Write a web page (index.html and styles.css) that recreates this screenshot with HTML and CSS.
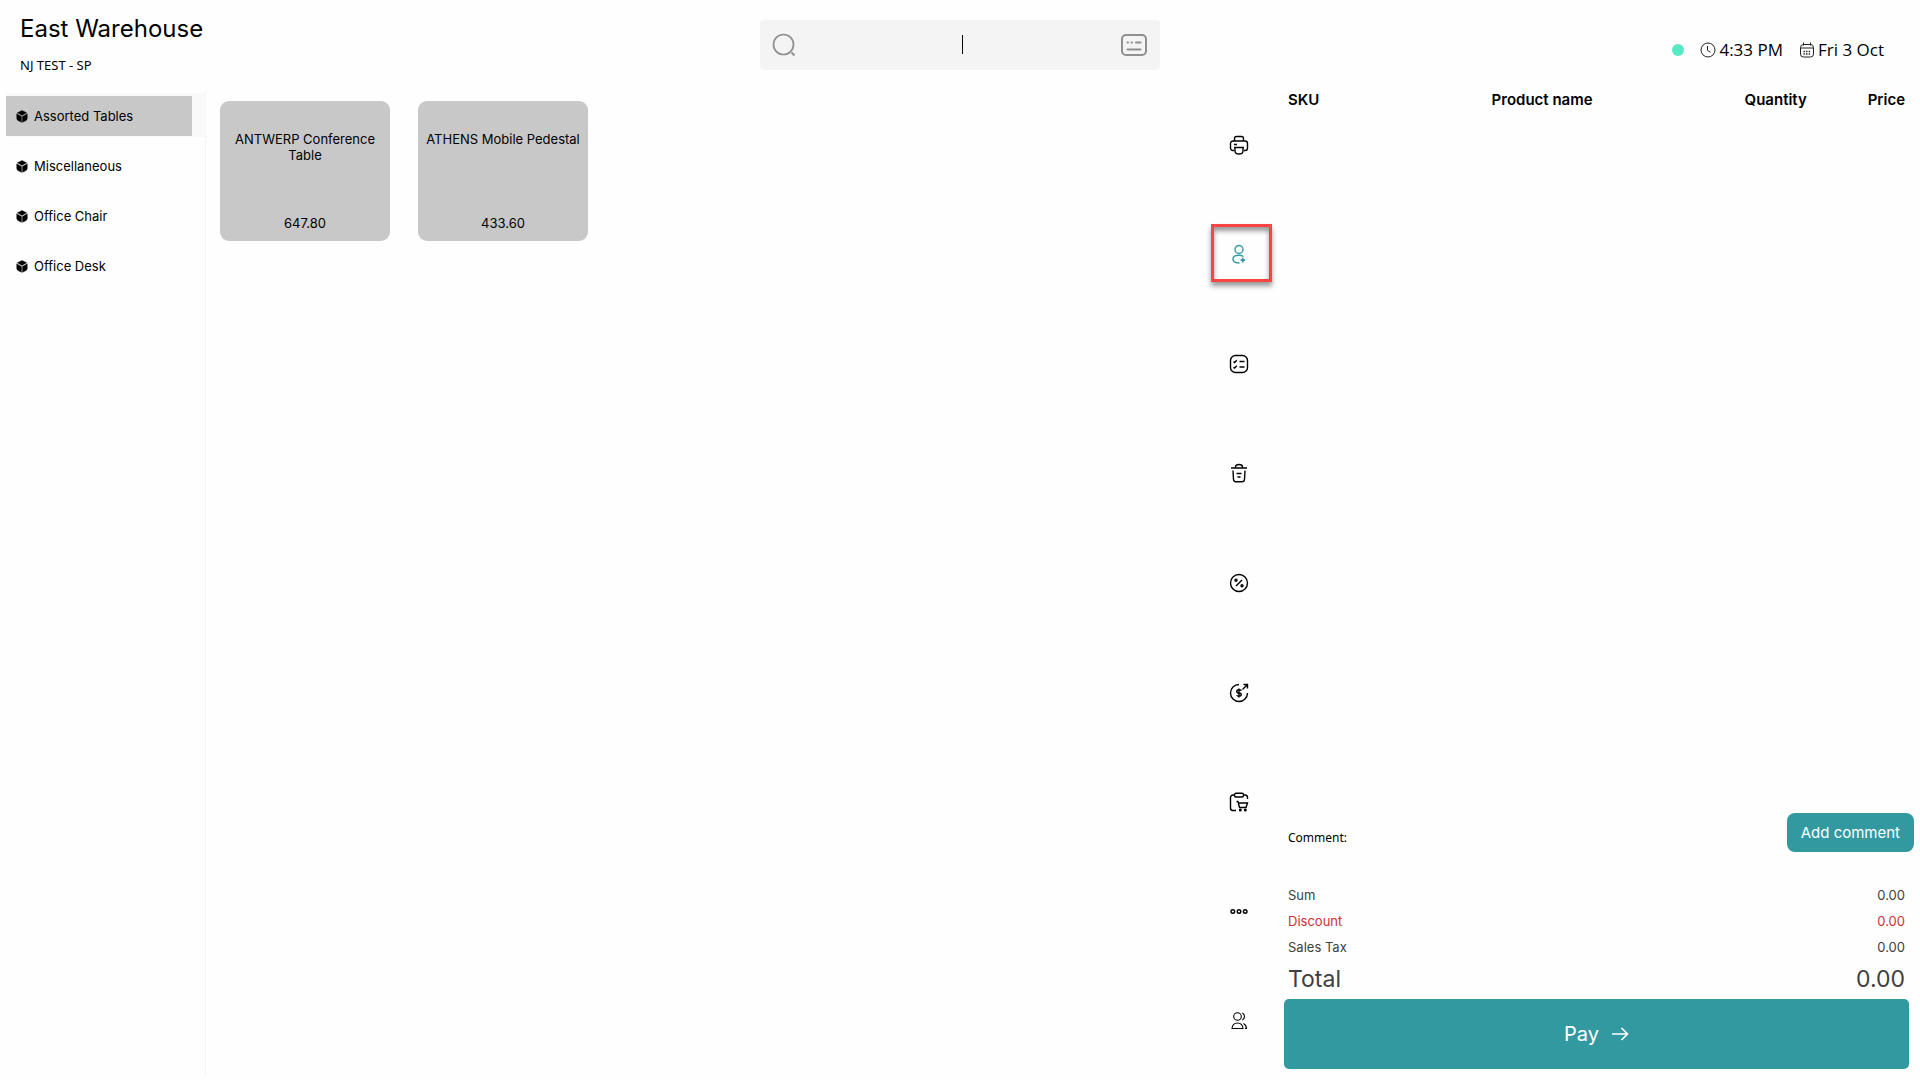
FILE: index.html
```
<!DOCTYPE html>
<html lang="en">
<head>
  <meta charset="UTF-8">
  <meta name="viewport" content="width=device-width, initial-scale=1.0">
  <title>East Warehouse</title>
  <link rel="stylesheet" href="styles.css">
</head>
<body>
  <!-- shared category icon -->
  <svg class="hidden">
    <symbol id="cube" viewBox="0 0 12 14">
      <path d="M6 .5 L11 3 L6 5.800 L1 3 Z M.3 4 L5.500 7 V13.300 L2 11.600 Q.3 10.700 .3 9 Z M11.700 4 L6.500 7 V13.300 L10 11.600 Q11.700 10.700 11.700 9 Z" fill="#000" stroke="#000" stroke-width=".4" stroke-linejoin="round"/>
    </symbol>
  </svg>

  <header class="header">
    <div class="store">
      <h1 class="store-name">East Warehouse</h1>
      <p class="store-user">NJ TEST - SP</p>
    </div>
    <div class="search">
      <svg class="search-icon" width="24" height="24" viewBox="0 0 24 24" fill="none" stroke="#8f8f8f" stroke-width="1.700">
        <circle cx="11.500" cy="11.500" r="10"/>
        <path d="M19.500 19.500l3 3" stroke-width="2"/>
      </svg>
      <input class="search-field" type="text" name="search" aria-label="Search" />
      <span class="caret"></span>
      <button class="keyboard-btn" aria-label="Keyboard">
        <svg width="26" height="22" viewBox="0 0 26 22" fill="none" stroke="#8f8f8f" stroke-width="2" stroke-linecap="round">
          <rect x="1" y="1" width="24" height="20" rx="4"/>
          <path d="M6.500 8.500h.5M10.500 8.500h.5M15 8.500h4.500M6.500 15.500h13"/>
        </svg>
      </button>
    </div>
    <div class="status">
      <span class="online"></span>
      <span class="status-item">
        <svg width="16" height="16" viewBox="0 0 16 16" fill="none" stroke="#222">
          <circle cx="8" cy="8" r="7"/>
          <path d="M7.500 4v4.300l3 2"/>
        </svg>
        4:33 PM
      </span>
      <span class="status-item">
        <svg width="16" height="16" viewBox="0 0 16 16" fill="none" stroke="#222">
          <rect x="1.500" y="2.500" width="13" height="12.500" rx="3"/>
          <path d="M1.500 6h13M4.500 .5v3M11.500 .5v3"/>
          <path d="M4.500 9.500h7M4.500 12h7" stroke-width="1.400" stroke-dasharray="1.400 1.200"/>
        </svg>
        Fri 3 Oct
      </span>
    </div>
  </header>

  <main class="main">
    <nav class="sidebar">
      <div class="category active"><button class="category-btn"><svg width="12" height="13"><use href="#cube"/></svg>Assorted Tables</button></div>
      <div class="category"><button class="category-btn"><svg width="12" height="13"><use href="#cube"/></svg>Miscellaneous</button></div>
      <div class="category"><button class="category-btn"><svg width="12" height="13"><use href="#cube"/></svg>Office Chair</button></div>
      <div class="category"><button class="category-btn"><svg width="12" height="13"><use href="#cube"/></svg>Office Desk</button></div>
    </nav>

    <section class="products">
      <button class="product">
        <span class="product-name">ANTWERP Conference Table</span>
        <span>647.80</span>
      </button>
      <button class="product">
        <span class="product-name">ATHENS Mobile Pedestal</span>
        <span>433.60</span>
      </button>
    </section>

    <div class="tools">
      <button class="tool" aria-label="Print">
        <svg class="tool-icon" viewBox="0 0 20 20">
          <path d="M5.500 6V3.500a2 2 0 0 1 2-2h5a2 2 0 0 1 2 2V6"/>
          <path d="M5 15.500H4a2.500 2.500 0 0 1-2.500-2.500V8.500A2.500 2.500 0 0 1 4 6h12a2.500 2.500 0 0 1 2.500 2.500V13a2.500 2.500 0 0 1-2.500 2.500h-1"/>
          <path d="M5 12.500h10M6 12.500v3.500q0 3 4 3t4-3v-3.500M5 9.500h3"/>
        </svg>
      </button>
      <button class="tool highlighted" aria-label="Add customer">
        <svg class="tool-icon" viewBox="0 0 20 20">
          <circle cx="10" cy="5.500" r="4"/>
          <path d="M14.500 12.500q-2-1.300-5-1.300c-3.500 0-5.500 1.500-5.500 3.900s2 3.900 5.500 3.900h1"/>
          <path d="M13.800 13.800v4.600M11.500 16.100h4.600" stroke-width="1.700"/>
        </svg>
      </button>
      <button class="tool" aria-label="Order list">
        <svg class="tool-icon" viewBox="0 0 20 20">
          <rect x="1.500" y="1.500" width="17" height="17" rx="5"/>
          <path d="M10.500 7.500h5M10.500 13h5M4.500 7.800l1 .8 2.300-2.300M4.500 13.300l1 .8 2.300-2.300"/>
        </svg>
      </button>
      <button class="tool" aria-label="Delete">
        <svg class="tool-icon" viewBox="0 0 20 20">
          <path d="M2 5h16M6.500 5V4q0-2.500 3.500-2.500T13.500 4v1M4 7.500l.5 9q.2 2.200 2.500 2.200h6q2.300 0 2.500-2.200l.5-9M7.500 10.500h5M8.500 14h3"/>
        </svg>
      </button>
      <button class="tool" aria-label="Discount">
        <svg class="tool-icon" viewBox="0 0 20 20">
          <circle cx="10" cy="10" r="8.500"/>
          <path d="M7 13l6-6"/>
          <circle cx="7" cy="7.300" r="1"/>
          <circle cx="13" cy="12.700" r="1"/>
        </svg>
      </button>
      <button class="tool" aria-label="Refund">
        <svg class="tool-icon" viewBox="0 0 20 20">
          <path d="M10 1.500A8.500 8.500 0 1 0 18.500 10M13.500 6.500l5-5M14.500 1.500h4v4"/>
          <path d="M12.300 7.800q-.5-1-2.300-1-2.200 0-2.200 1.600t2.200 1.600 2.200 1.600-2.200 1.600q-1.800 0-2.300-1M10 5.500v9"/>
        </svg>
      </button>
      <button class="tool" aria-label="Sales orders">
        <svg class="tool-icon" viewBox="0 0 20 20">
          <rect x="5.500" y="1.200" width="9" height="3.800" rx="1.500"/>
          <path d="M5 3H4a2.500 2.500 0 0 0-2.500 2.500v10.500A2.500 2.500 0 0 0 4 18.500h3M15 3h1a2.500 2.500 0 0 1 2.500 2.500V7"/>
          <path d="M7.500 9.500H9l1.500 6h6.500l1.500-4.500H9.500"/>
          <circle cx="11.300" cy="18" r=".8"/>
          <circle cx="16.300" cy="18" r=".8"/>
        </svg>
      </button>
      <button class="tool" aria-label="More">
        <svg class="tool-icon" viewBox="0 0 20 20">
          <circle cx="3.800" cy="9.500" r="1.800"/>
          <circle cx="10" cy="9.500" r="1.800"/>
          <circle cx="16.200" cy="9.500" r="1.800"/>
        </svg>
      </button>
      <button class="tool" aria-label="Users">
        <svg class="tool-icon thin" viewBox="0 0 20 20">
          <circle cx="8.500" cy="5.500" r="3.800"/>
          <path d="M13.300 2q2.200 1 2.200 3.500T13.300 9M3 17.500q.5-5.500 5.500-5.500t5.500 5.500zM14.500 12.500q2.700 1.300 3 5h-1.500"/>
        </svg>
      </button>
    </div>

    <section class="cart">
      <table class="cart-table">
        <thead>
          <tr>
            <th class="col-sku">SKU</th>
            <th class="col-name">Product name</th>
            <th class="col-quantity">Quantity</th>
            <th class="col-price">Price</th>
          </tr>
        </thead>
      </table>
      <div class="comment">
        <span class="comment-text">Comment:</span>
        <button class="comment-btn">Add comment</button>
      </div>
      <dl class="totals">
        <div class="row"><dt>Sum</dt><dd>0.00</dd></div>
        <div class="row discount"><dt>Discount</dt><dd>0.00</dd></div>
        <div class="row"><dt>Sales Tax</dt><dd>0.00</dd></div>
        <div class="row total"><dt>Total</dt><dd>0.00</dd></div>
      </dl>
      <button class="pay-btn">
        Pay
        <svg width="18" height="16" viewBox="0 0 18 16" fill="none" stroke="#fff" stroke-width="1.600">
          <path d="M1 8h15M10.500 2l6 6-6 6"/>
        </svg>
      </button>
    </section>
  </main>
</body>
</html>
```
FILE: styles.css
```
*, *::after {
  box-sizing: border-box;
}
body {
  margin: 0;
  min-height: 100vh;
  display: flex;
  flex-direction: column;
  background-color: #fefefe;
  color: #000;
  font-family: Inter, "Liberation Sans", sans-serif;
  font-size: 13px;
  line-height: 16px;
}
button {
  border: none;
  padding: 0;
  background: none;
  color: inherit;
  font: inherit;
  cursor: pointer;
}
svg {
  flex-shrink: 0;
}
.hidden {
  display: none;
}

/* Header */
.header {
  height: 90px;
  display: grid;
  grid-template-columns: 1fr 400px 1fr;
}
.store {
  padding: 13px 20px 0;
}
.store-name {
  margin: 0;
  font-size: 24px;
  line-height: 32px;
  font-weight: 400;
}
.store-user {
  margin: 12px 0 0;
  font-family: "Noto Sans", sans-serif;
  font-size: 13px;
}
.search {
  position: relative;
  height: 50px;
  margin-top: 20px;
  padding: 0 13px 0 12px;
  display: flex;
  align-items: center;
  background-color: #f4f4f4;
  border-radius: 4px;
}
.search-field {
  flex-grow: 1;
  min-width: 0;
  height: 40px;
  border: none;
  outline: none;
  background: none;
  text-align: center;
  font: inherit;
}
.caret {
  position: absolute;
  left: 202px;
  top: 15px;
  width: 1px;
  height: 19px;
  background-color: #000;
}
.keyboard-btn {
  display: flex;
}
.status {
  display: flex;
  justify-content: flex-end;
  align-items: center;
  gap: 16px;
  height: 99px;
  padding-right: 36px;
  font-family: "Open Sans", sans-serif;
  font-size: 17px;
}
.online {
  width: 12px;
  height: 12px;
  border-radius: 50%;
  background-color: #57e8c4;
}
.status-item {
  display: flex;
  align-items: center;
  gap: 3px;
}

.main {
  flex-grow: 1;
  display: flex;
  padding-bottom: 4px;
}

/* Categories */
.sidebar {
  width: 206px;
  padding: 3px 0 0 6px;
  border-right: 1px solid #f4f4f4;
}
.category {
  height: 44px;
  margin-bottom: 6px;
  padding: 3px 13px 1px 0;
}
.category.active {
  background-color: #f9f9f9;
}
.category-btn {
  width: 100%;
  height: 40px;
  padding-left: 10px;
  display: flex;
  align-items: center;
  gap: 6px;
}
.active .category-btn {
  background-color: #c8c8c8;
}

/* Products */
.products {
  flex-grow: 1;
  display: flex;
  flex-wrap: wrap;
  align-content: flex-start;
  gap: 28px;
  padding: 11px 14px;
}
.product {
  width: 170px;
  height: 140px;
  padding: 30px 8px 10px;
  display: flex;
  flex-direction: column;
  justify-content: space-between;
  align-items: center;
  background-color: #c8c8c8;
  border-radius: 9px;
}

/* Actions column */
.tools {
  width: 82px;
  display: flex;
  flex-direction: column;
}
.tool {
  position: relative;
  flex: 1;
  display: flex;
  align-items: center;
  justify-content: center;
}
.tool-icon {
  width: 20px;
  height: 20px;
  fill: none;
  stroke: #000;
  stroke-width: 1.4;
}
.tool-icon.thin {
  stroke-width: 1.1;
}
.highlighted .tool-icon {
  stroke: #3399a1;
}
.highlighted::after {
  content: "";
  position: absolute;
  left: 13px;
  top: 24px;
  width: 61px;
  height: 58px;
  border: 3px solid #fd4444;
  box-shadow: 0 4px 5px rgba(0, 0, 0, 0.4), inset 0 4px 5px rgba(0, 0, 0, 0.4);
}

/* Cart */
.cart {
  width: 33.3333%;
  display: flex;
  flex-direction: column;
  padding: 0 11px 7px 4px;
}
.cart-table {
  width: 100%;
  margin-bottom: auto;
  padding: 0 4px;
  border-spacing: 0;
  table-layout: fixed;
  font-size: 15px;
  line-height: 20px;
}
.cart-table th {
  padding: 0;
  font-weight: 600;
  text-align: left;
}
.col-sku {
  width: 33%;
}
.col-name {
  width: 41%;
}
.cart-table .col-price {
  text-align: right;
}
.comment {
  display: flex;
  justify-content: space-between;
  align-items: center;
  margin-right: -5px;
  padding-left: 4px;
}
.comment-text {
  padding-top: 10px;
  font-family: "Noto Sans", sans-serif;
  font-size: 12px;
}
.comment-btn {
  height: 39px;
  padding: 0 14px;
  border-radius: 8px;
  background-color: #3399a1;
  color: #fff;
  font-size: 15px;
}
.totals {
  margin: 30px 4px 0;
  color: #404040;
}
.row {
  display: flex;
  justify-content: space-between;
  line-height: 26px;
}
.row dd {
  margin: 0;
}
.discount {
  color: #cc3038;
}
.total {
  font-size: 23px;
  line-height: 39px;
}
.pay-btn {
  height: 70px;
  display: flex;
  align-items: center;
  justify-content: center;
  gap: 12px;
  border-radius: 5px;
  background-color: #3399a1;
  color: #fff;
  font-size: 20px;
}
```
